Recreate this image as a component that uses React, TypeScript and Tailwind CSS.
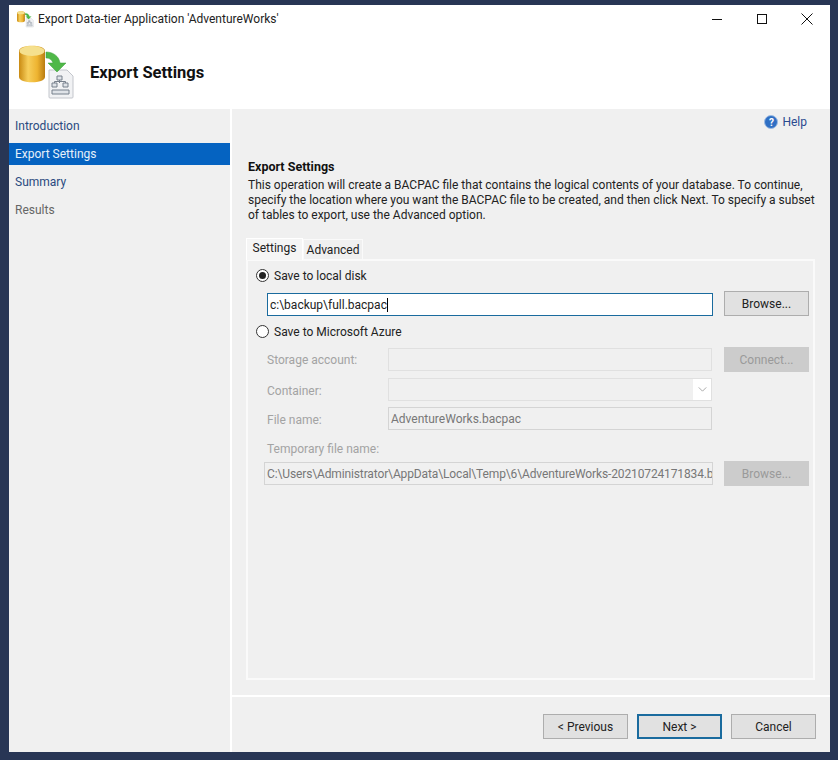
function DbIcon({ small }: { small?: boolean }) {
  // database cylinder with a green arrow going into a document
  const id = small ? 'dbs' : 'db'
  return (
    <svg viewBox="0 0 56 56" className={small ? 'w-[17px] h-[17px]' : 'w-[56px] h-[56px]'}>
      <defs>
        <linearGradient id={id} x1="0" x2="1" y1="0" y2="0">
          <stop offset="0" stopColor="#c98a12" />
          <stop offset="0.35" stopColor="#f7cf5c" />
          <stop offset="0.7" stopColor="#eeb431" />
          <stop offset="1" stopColor="#b97c10" />
        </linearGradient>
      </defs>
      <path d="M0 6 C0 -1 26 -1 26 6 V32 C26 39 0 39 0 32 Z" fill={`url(#${id})`} />
      <ellipse cx="13" cy="6" rx="12.5" ry="5" fill="#f5e08e" />
      <path d="M30 25 H48 L54 31 V52 Q54 53 53 53 H31 Q30 53 30 52 Z" fill="#f1f2f4" stroke="#c3c6cc" />
      <path d="M38 31 h5 v4 h-5 z M33 38 h5 v4 h-5 z M44 38 h5 v4 h-5 z" fill="#dfe3e8" stroke="#77808c" />
      <path d="M40.500 35 v3 M35.500 38 v-1.500 h11 v1.500" fill="none" stroke="#77808c" />
      <path d="M33 45 h17 v4 h-17 z" fill="#dfe3e8" stroke="#77808c" />
      <path d="M27 7 C34 7 40 11 41 18 H47 L38 27 L29 18 H34 C33 15 31 13 27 13 Z" fill="#4fb848" stroke="#3b9c3a" strokeWidth="0.5" />
    </svg>
  )
}

function Radio({ checked }: { checked?: boolean }) {
  return (
    <span className="w-[13px] h-[13px] rounded-full border border-[#333] bg-white flex items-center justify-center">
      {checked && <span className="w-[7px] h-[7px] rounded-full bg-[#222]"></span>}
    </span>
  )
}

function Btn({ label, disabled, focus }: { label: string; disabled?: boolean; focus?: boolean }) {
  return (
    <div
      className={
        'w-[85px] h-[25px] shrink-0 flex items-center justify-center text-[12px] ' +
        (disabled
          ? 'bg-[#cccccc] text-[#9a9a9a]'
          : focus
            ? 'bg-[#e1e1e1] border-2 border-[#1a6b9e] text-[#222]'
            : 'bg-[#e1e1e1] border border-[#adadad] text-[#222]')
      }
    >
      {label}
    </div>
  )
}

export default function App() {
  return (
    <div className="w-[838px] h-[760px] bg-[#283655] pt-[5px] pb-[8px] pl-[9px] pr-[8px] overflow-hidden font-['Roboto',sans-serif] text-[12px] text-[#222]">
      <div className="w-[821px] h-[747px] flex flex-col bg-[#f0f0f0]">
        {/* Title and wizard header */}
        <div className="h-[104px] bg-white flex flex-col shrink-0">
          <div className="h-[28px] flex items-center pl-[8px]">
            <DbIcon small />
            <span className="ml-[4px] text-[12px] text-[#222]">Export Data-tier Application 'AdventureWorks'</span>
            <div className="ml-auto flex items-center pr-[16px] gap-[31px]">
              <svg viewBox="0 0 14 14" className="w-[14px] h-[14px]"><path d="M2 7.500 H12" stroke="#111" strokeWidth="1" /></svg>
              <svg viewBox="0 0 14 14" className="w-[14px] h-[14px]"><rect x="2.500" y="2.500" width="9" height="9" fill="none" stroke="#111" /></svg>
              <svg viewBox="0 0 14 14" className="w-[14px] h-[14px]"><path d="M1.500 1.500 L12.500 12.500 M12.500 1.500 L1.500 12.500" stroke="#111" strokeWidth="1" /></svg>
            </div>
          </div>
          <div className="flex items-center pl-[10px] mt-[12px]">
            <DbIcon />
            <h1 className="ml-[15px] text-[16.5px] font-bold text-[#111]">Export Settings</h1>
          </div>
        </div>

        <div className="flex-1 flex min-h-0">
          {/* Left nav */}
          <div className="w-[221px] shrink-0 pt-[6px] text-[12px]">
            <div className="h-[22px] flex items-center pl-[6px] mb-[6px] text-[#2a4a7f]">Introduction</div>
            <div className="h-[22px] flex items-center pl-[6px] mb-[6px] bg-[#0563c1] text-[#e6f0fa]">Export Settings</div>
            <div className="h-[22px] flex items-center pl-[6px] mb-[6px] text-[#2a4a7f]">Summary</div>
            <div className="h-[22px] flex items-center pl-[6px] text-[#666]">Results</div>
          </div>

          {/* Main panel */}
          <div className="w-[600px] shrink-0 border-l-2 border-white flex flex-col">
            <div className="h-[586px] pl-[14px] pr-[15px] flex flex-col shrink-0">
              <div className="h-[26px] flex items-center justify-end gap-[4px] pr-[8px] text-[#2a4a8f]">
                <span className="w-[14px] h-[14px] rounded-full bg-[#2f6fc4] border border-[#9dbbe3] text-white text-[10px] font-bold flex items-center justify-center">?</span>
                Help
              </div>
              <div className="pl-[2px] pt-[24px]">
                <div className="font-bold text-[12.5px] text-[#111] leading-[15px]">Export Settings</div>
                <p className="mt-[4px] leading-[15px] text-[#222]">
                  <span className="block whitespace-nowrap">This operation will create a BACPAC file that contains the logical contents of your database. To continue,</span>
                  <span className="block whitespace-nowrap">specify the location where you want the BACPAC file to be created, and then click Next. To specify a subset</span>
                  <span className="block whitespace-nowrap">of tables to export, use the Advanced option.</span>
                </p>
              </div>

              {/* Tabs */}
              <div className="mt-[14px] flex items-end h-[22px] relative z-10">
                <div className="h-[22px] w-[57px] bg-[#f5f5f5] border border-b-0 border-white flex items-center justify-center -mb-px pb-[4px]">Settings</div>
                <div className="h-[20px] w-[60px] border border-b-0 border-[#fafafa] flex items-center justify-center">Advanced</div>
              </div>
              <div className="h-[421px] w-[569px] border-2 border-[#fafafa] pl-[8px] pr-[4px] pt-[4px]">
                <div className="flex items-center gap-[5px] h-[20px]">
                  <Radio checked />
                  <span className="pt-[2px]">Save to local disk</span>
                </div>
                <div className="mt-[6px] flex items-end justify-between">
                  <div className="ml-[11px] w-[446px] h-[23px] bg-white border border-[#1a6b9e] flex items-center pl-[2px]">
                    c:\backup\full.bacpac<span className="w-px h-[14px] bg-black"></span>
                  </div>
                  <Btn label="Browse..." />
                </div>
                <div className="mt-[5px] flex items-center gap-[5px] h-[20px]">
                  <Radio />
                  <span className="pt-[2px]">Save to Microsoft Azure</span>
                </div>

                <div className="mt-[6px] flex items-center h-[25px] text-[#a3a3a3]">
                  <span className="ml-[11px] w-[121px]">Storage account:</span>
                  <div className="w-[324px] h-[23px] border border-[#e0e0e0]"></div>
                  <div className="ml-auto"><Btn label="Connect..." disabled /></div>
                </div>
                <div className="mt-[6px] flex items-center h-[23px] text-[#a3a3a3]">
                  <span className="ml-[11px] w-[121px] pt-[2px]">Container:</span>
                  <div className="w-[324px] h-[23px] border border-[#e0e0e0] flex justify-end">
                    <div className="w-[18px] h-full bg-white flex items-center justify-center">
                      <svg viewBox="0 0 10 6" className="w-[9px] h-[5px]"><path d="M0.500 0.500 L5 5 L9.500 0.500" fill="none" stroke="#999" /></svg>
                    </div>
                  </div>
                </div>
                <div className="mt-[6px] flex items-center h-[23px] text-[#a3a3a3]">
                  <span className="ml-[11px] w-[121px] pt-[2px]">File name:</span>
                  <div className="w-[324px] h-[23px] border border-[#d4d4d4] flex items-center pl-[2px] text-[#777]">AdventureWorks.bacpac</div>
                </div>
                <div className="mt-[12px] ml-[11px] leading-[15px] text-[#a3a3a3]">Temporary file name:</div>
                <div className="mt-[4px] flex items-center justify-between">
                  <div className="ml-[8px] w-[449px] h-[23px] border border-[#d4d4d4] flex items-center pl-[2px] text-[#777] overflow-hidden whitespace-nowrap tracking-[-0.13px]">
                    C:\Users\Administrator\AppData\Local\Temp\6\AdventureWorks-20210724171834.b
                  </div>
                  <Btn label="Browse..." disabled />
                </div>
              </div>
            </div>

            {/* Footer buttons */}
            <div className="flex-1 border-t-2 border-white flex items-start justify-end gap-[9px] pt-[17px] pr-[14px]">
              <Btn label="< Previous" />
              <Btn label="Next >" focus />
              <Btn label="Cancel" />
            </div>
          </div>
        </div>
      </div>
    </div>
  )
}
